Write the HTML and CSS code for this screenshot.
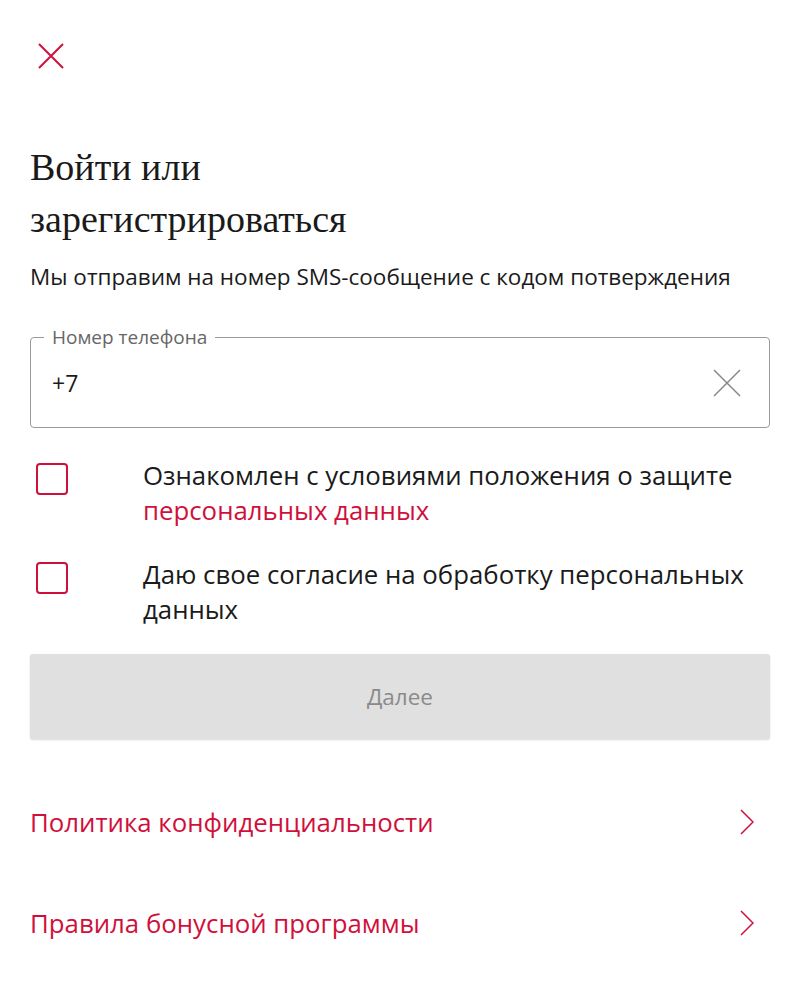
FILE: index.html
```html
<!DOCTYPE html>
<html lang="ru">
<head>
    <meta charset="UTF-8">
    <meta name="viewport" content="width=device-width, initial-scale=1.0">
    <title>Вход</title>
    <link rel="stylesheet" href="styles.css">
</head>
<body>
    <div class="page">
        <button class="close-btn" aria-label="Закрыть">
            <svg width="28" height="28" viewBox="0 0 28 28"><path d="M2 2L26 26M26 2L2 26" stroke="currentColor" stroke-width="2" fill="none"/></svg>
        </button>

        <h1 class="title">Войти или<br>зарегистрироваться</h1>
        <p class="subtitle">Мы отправим на номер SMS-сообщение с кодом потверждения</p>

        <fieldset class="phone-field">
            <legend>Номер телефона</legend>
            <div class="phone-row">
                <span class="phone-value">+7</span>
                <svg class="clear-icon" width="28" height="28" viewBox="0 0 28 28"><path d="M1 1L27 27M27 1L1 27" stroke="currentColor" stroke-width="1.5" fill="none"/></svg>
            </div>
        </fieldset>

        <div class="checks">
            <label class="check">
                <span class="check-box"></span>
                <span class="check-text">Ознакомлен с условиями положения о защите <a href="#" class="red">персональных данных</a></span>
            </label>
            <label class="check">
                <span class="check-box"></span>
                <span class="check-text">Даю свое согласие на обработку персональных данных</span>
            </label>
        </div>

        <button class="next-btn" disabled>Далее</button>

        <div class="links">
            <a href="#" class="link-row">
                <span>Политика конфиденциальности</span>
                <svg width="14" height="26" viewBox="0 0 14 26"><path d="M1 1L13 13L1 25" stroke="currentColor" stroke-width="1.5" fill="none"/></svg>
            </a>
            <a href="#" class="link-row">
                <span>Правила бонусной программы</span>
                <svg width="14" height="26" viewBox="0 0 14 26"><path d="M1 1L13 13L1 25" stroke="currentColor" stroke-width="1.5" fill="none"/></svg>
            </a>
        </div>
    </div>
</body>
</html>
```

FILE: styles.css
```css
* {
    margin: 0;
    padding: 0;
    box-sizing: border-box;
}

a {
    text-decoration: none;
    color: inherit;
}

body {
    font-family: 'Open Sans', 'Noto Sans', sans-serif;
    background-color: #fff;
    color: #1a1a1a;
}

.red {
    color: #d0103c;
}

.page {
    padding: 0 30px;
}

.close-btn {
    display: block;
    margin: 42px 0 0 7px;
    width: 28px;
    height: 28px;
    border: none;
    background: none;
    color: #d0103c;
    cursor: pointer;
}

.title {
    margin-top: 71px;
    font-family: 'Liberation Serif', serif;
    font-weight: normal;
    font-size: 38px;
    line-height: 52px;
    color: #1a1a1a;
}

.subtitle {
    margin-top: 17px;
    font-size: 22.5px;
    line-height: 30px;
}

.phone-field {
    margin-top: 35px;
    border: 1.5px solid #9a9a9a;
    border-radius: 4px;
    padding: 0 28px 0 21px;
}

.phone-field legend {
    padding: 0 8px;
    margin-left: -8px;
    font-size: 19px;
    line-height: 20px;
    color: #666;
}

.phone-row {
    display: flex;
    align-items: center;
    justify-content: space-between;
    height: 80px;
    padding-bottom: 8px;
}

.phone-value {
    font-size: 23px;
}

.clear-icon {
    color: #888;
}

.checks {
    margin-top: 30px;
    display: flex;
    flex-direction: column;
    gap: 29px;
}

.check {
    display: flex;
    align-items: flex-start;
    cursor: pointer;
}

.check-box {
    flex: 0 0 auto;
    width: 32px;
    height: 32px;
    margin: 5px 0 0 6px;
    border: 2px solid #d0103c;
    border-radius: 4px;
}

.check-text {
    margin-left: 75px;
    font-size: 25.8px;
    line-height: 35px;
}

.next-btn {
    display: block;
    width: 100%;
    height: 85px;
    margin-top: 27px;
    border: none;
    border-radius: 3px;
    background: #e0e0e0;
    box-shadow: 0 1px 2px rgba(0,0,0,0.15);
    font-family: inherit;
    font-size: 22.5px;
    color: #8a8a8a;
}

.links {
    margin-top: 53px;
    display: flex;
    flex-direction: column;
    gap: 41px;
}

.link-row {
    display: flex;
    align-items: center;
    justify-content: space-between;
    height: 60px;
    padding-right: 16px;
    font-size: 25.8px;
    color: #d0103c;
}
```
